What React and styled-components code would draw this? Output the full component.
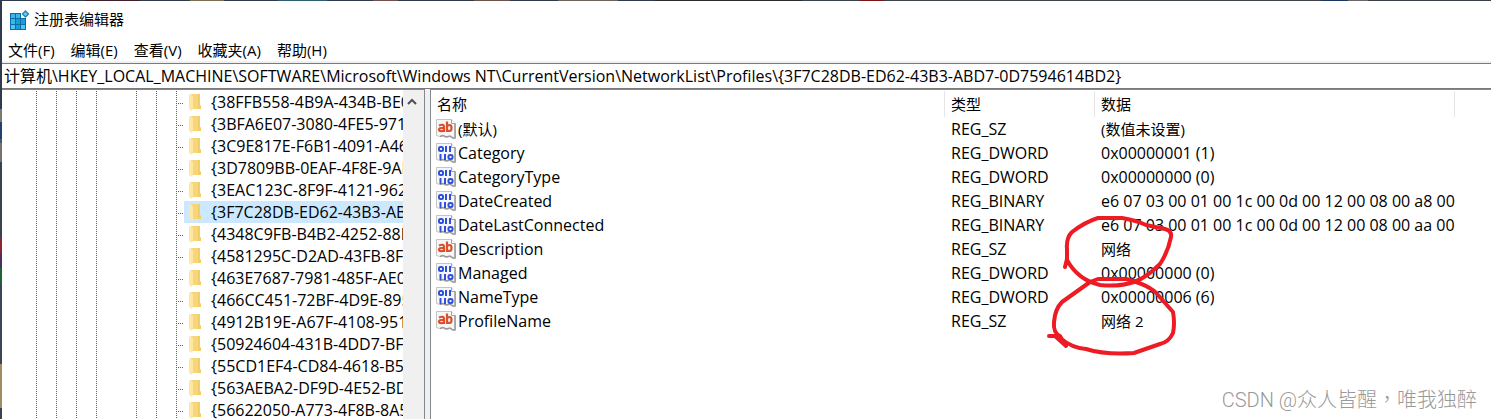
import React from "react";
import styled, { createGlobalStyle, css } from "styled-components";

const GlobalStyle = createGlobalStyle`
    * {
        box-sizing: border-box;
    }

    body {
        margin: 0;
        font-family: "Open Sans", "Noto Sans CJK SC", sans-serif;
        font-size: 15px;
        color: #000;
    }

    button, input, table {
        font: inherit;
        color: inherit;
    }
`

const Desktop = styled.div`
    height: 100vh;
    padding: 1px 0 0 2px;
    background:
        linear-gradient(to bottom, #2f3b4c 0 109px, #7d7773 109px 122px, #23406f 122px 139px, #4c5563 139px 143px, #77706c 143px 162px, #39434f 162px 237px, #8a2535 237px 253px, #4a2f63 253px 268px, #1e6432 268px 284px, #3a4654 284px 364px, #a08c60 364px 408px, #39434f 408px) 0 0 / 2px 100% no-repeat,
        linear-gradient(to right, #2f3a4c 0 85px, #401e28 85px 140px, #2f3a4c 140px 190px, #7a6d50 190px 224px, #2f3a4c 224px 278px, #2d5f74 278px 327px, #2f3a4c 327px 373px, #74504a 373px 398px, #2f3a4c 398px 474px, #6d5448 474px 510px, #2f3a4c 510px 558px, #6e6258 558px 618px, #2f3a4c 618px 655px, #2a2a26 655px 802px, #3a434c 802px 860px, #7a1418 860px 884px, #3c444a 884px 1321px, #1b3560 1321px 1348px, #6a6868 1348px 1368px, #39404a 1368px);
    overflow: hidden;
`

const Window = styled.div`
    position: relative;
    height: 100%;
    display: flex;
    flex-direction: column;
    background: #fff;
`

const TitleBar = styled.header`
    height: 38px;
    flex: none;
    display: flex;
    align-items: center;
    gap: 4px;
    padding-left: 7px;
`

const Title = styled.h1`
    margin: 0;
    padding-bottom: 2px;
    font-size: 15px;
    font-weight: 400;
    line-height: 22px;
`

const MenuBar = styled.nav`
    height: 24px;
    flex: none;
    display: flex;
    gap: 16px;
    padding: 0 6px;
    border-bottom: 2px solid #f0f0f0;
`

const MenuItem = styled.button`
    padding: 0;
    border: 0;
    background: none;
    line-height: 22px;
`

const AddressBar = styled.input`
    height: 26px;
    flex: none;
    width: 100%;
    padding: 0 2px 2px;
    border: 0;
    border-top: 1px solid #7a7a7a;
    border-bottom: 1px solid #7a7a7a;
    outline: none;
    background: #fff;
    font-size: 16px;
`

const Panes = styled.main`
    flex: 1;
    min-height: 0;
    display: flex;
    gap: 5px;
    background: #f0f0f0;
`

const TreePane = styled.section`
    width: 423px;
    flex: none;
    display: flex;
    border-top: 1px solid #828790;
    border-right: 1px solid #828790;
    background: #fff;
`

const Tree = styled.ul`
    flex: 1;
    min-width: 0;
    margin: 0;
    padding: 1px 0 0 20px;
    list-style: none;
    overflow: hidden;
`

const TreeItem = styled.li`
    height: 22px;
    display: flex;
`

const Guide = styled.span`
    width: 20px;
    flex: none;
    background: ${props => props.$empty
        ? "none"
        : "repeating-linear-gradient(to bottom, #606060 0 1px, transparent 1px 2px) 14px 0 / 1px 100% no-repeat"};
`

const Branch = styled.span`
    width: 8px;
    flex: none;
    margin-left: 14px;
    background:
        repeating-linear-gradient(to bottom, #606060 0 1px, transparent 1px 2px) 0 0 / 1px 100% no-repeat,
        repeating-linear-gradient(to right, #606060 0 1px, transparent 1px 2px) 0 12px / 100% 1px no-repeat;
`

const TreeKey = styled.button`
    flex: 1;
    min-width: 0;
    display: flex;
    align-items: center;
    gap: 9px;
    padding: 0 0 0 5px;
    border: 0;
    background: ${props => props.$selected ? "#cce8ff" : "none"};
    font-size: 16px;
    line-height: 22px;
    white-space: nowrap;
    overflow: hidden;

    svg {
        flex: none;
    }
`

const ScrollBar = styled.div`
    width: 21px;
    flex: none;
    background: #f0f0f0;
`

const ScrollUp = styled.button`
    width: 100%;
    height: 22px;
    display: flex;
    align-items: center;
    justify-content: center;
    padding: 0 3px 0 0;
    border: 0;
    background: none;
`

const ValuesPane = styled.section`
    flex: 1;
    min-width: 0;
    padding-top: 1px;
    border-top: 1px solid #828790;
    border-left: 1px solid #828790;
    background: #fff;
    overflow: hidden;
`

const Values = styled.table`
    width: 100%;
    table-layout: fixed;
    border-collapse: separate;
    border-spacing: 0;
`

const Column = styled.col`
    width: ${props => props.$width};
`

const cell = css`
    padding: 0 0 0 6px;
    text-align: left;
    font-weight: 400;
    white-space: nowrap;
`

const HeadCell = styled.th`
    ${cell}
    height: 26px;
    line-height: 26px;
    border-right: 1px solid #e5e5e5;

    &:last-child {
        border: 0;
    }
`

const Cell = styled.td`
    ${cell}
    height: 24px;
    font-size: ${props => props.$cjk ? "15px" : "16px"};
    line-height: 24px;
`

const Name = styled.span`
    display: flex;
    align-items: center;
    gap: 2px;
    height: 24px;
    margin-left: -1px;
`

const Marks = styled.svg`
    position: absolute;
    left: 1040px;
    top: 210px;
    pointer-events: none;
`

const Watermark = styled.div`
    position: absolute;
    right: 14px;
    bottom: 5px;
    font-family: Roboto, "Noto Sans CJK TC", sans-serif;
    font-size: 20px;
    font-weight: 300;
    line-height: 28px;
    color: #999;
`

const RegistryIcon = () => (
    <svg width="21" height="21" viewBox="0 0 21 21" aria-hidden="true">
        <path d="M1 3h11v5h5v12H1z" fill="#0a6ea6" />
        <path d="M2 4h4v4H2zM7 4h4v4H7zM2 9h4v5H2z" fill="#3fb4ea" />
        <path d="M7 9h4v5H7zM12 9h4v5h-4zM7 15h4v4H7zM2 15h4v4H2z" fill="#1d9ad8" />
        <path d="M12 15h4v4h-4zM2 15h4v4H2z" fill="#52c4f2" />
        <path d="M16.500 0l4 4-4 4-4-4z" fill="#2685b5" />
        <path d="M16.500 2l2 2-2 2-2-2z" fill="#69cdf5" />
    </svg>
)

const FolderIcon = () => (
    <svg width="13" height="18" viewBox="0 0 13 18" aria-hidden="true">
        <path d="M2 1h9v11l1 1v3H3z" fill="#f7d67a" />
        <path d="M9 1h2v11l1 1v3H9z" fill="#f3cd68" />
        <path d="M0 1l4 2v13l-1 2-3-2z" fill="#ffe7a2" />
    </svg>
)

const Paper = () => (
    <>
        <path d="M0.500 0.500h15l4 4v14l-2 1-4-2-3 1-3-2-4 1-3-1z" fill="#f5f6f8" stroke="#c4c4c4" />
        <path d="M15.500 0.500v4h4" fill="#fff" stroke="#a0a0a0" />
        <path d="M19 5v14h-2l-3-2-4 1-3-1.500-3 1" fill="none" stroke="#999" strokeWidth="1.500" />
    </>
)

const StringIcon = () => (
    <svg width="20" height="20" viewBox="0 0 20 20" aria-hidden="true">
        <Paper />
        <g fill="none" stroke="#dc4f2c" strokeWidth="2.200">
            <path d="M3 6.500Q8 4.500 8 8v5M8 9H5.500Q3 9 3 10.700T5.500 12.200Q7.500 12 8 10.500" />
            <path d="M11 2.500V13M11 7.500Q12 6 13.500 6Q15.500 6 15.500 9T13.500 12Q12 12 11 11" />
        </g>
    </svg>
)

const BinaryIcon = () => (
    <svg width="20" height="20" viewBox="0 0 20 20" aria-hidden="true">
        <Paper />
        <g fill="none" stroke="#2f50dc" strokeWidth="2">
            <rect x="3" y="4" width="4" height="4" rx="1.500" />
            <path d="M10 3v6M14 3v6M4.500 11v6M9 11v6" />
            <rect x="12.500" y="12" width="4" height="4" rx="1.500" />
        </g>
    </svg>
)

const menus = ["文件(F)", "编辑(E)", "查看(V)", "收藏夹(A)", "帮助(H)"];

const path = "计算机\\HKEY_LOCAL_MACHINE\\SOFTWARE\\Microsoft\\Windows NT\\CurrentVersion\\NetworkList\\Profiles\\{3F7C28DB-ED62-43B3-ABD7-0D7594614BD2}";

// one entry per indent level, false where the parent has no further siblings
const levels = [true, true, true, true, false, true, true];

const keys = [
    "{38FFB558-4B9A-434B-BE0",
    "{3BFA6E07-3080-4FE5-971",
    "{3C9E817E-F6B1-4091-A46",
    "{3D7809BB-0EAF-4F8E-9AB",
    "{3EAC123C-8F9F-4121-962",
    "{3F7C28DB-ED62-43B3-AB",
    "{4348C9FB-B4B2-4252-88D",
    "{4581295C-D2AD-43FB-8F6",
    "{463E7687-7981-485F-AE0",
    "{466CC451-72BF-4D9E-895",
    "{4912B19E-A67F-4108-951",
    "{50924604-431B-4DD7-BF2",
    "{55CD1EF4-CD84-4618-B58",
    "{563AEBA2-DF9D-4E52-BD",
    "{56622050-A773-4F8B-8A5",
];

const values = [
    { name: "(默认)", type: "REG_SZ", data: "(数值未设置)", cjk: true },
    { name: "Category", type: "REG_DWORD", data: "0x00000001 (1)" },
    { name: "CategoryType", type: "REG_DWORD", data: "0x00000000 (0)" },
    { name: "DateCreated", type: "REG_BINARY", data: "e6 07 03 00 01 00 1c 00 0d 00 12 00 08 00 a8 00" },
    { name: "DateLastConnected", type: "REG_BINARY", data: "e6 07 03 00 01 00 1c 00 0d 00 12 00 08 00 aa 00" },
    { name: "Description", type: "REG_SZ", data: "网络", cjk: true },
    { name: "Managed", type: "REG_DWORD", data: "0x00000000 (0)" },
    { name: "NameType", type: "REG_DWORD", data: "0x00000006 (6)" },
    { name: "ProfileName", type: "REG_SZ", data: "网络 2", cjk: true },
];

const App = () => {

    return (
        <Desktop>
            <GlobalStyle />
            <Window>
                <TitleBar>
                    <RegistryIcon />
                    <Title>注册表编辑器</Title>
                </TitleBar>
                <MenuBar>
                    {menus.map(menu => (
                        <MenuItem key={menu} type="button">{menu}</MenuItem>
                    ))}
                </MenuBar>
                <AddressBar type="text" aria-label="地址" defaultValue={path} />
                <Panes>
                    <TreePane>
                        <Tree>
                            {keys.map(key => (
                                <TreeItem key={key}>
                                    {levels.map((line, index) => (
                                        <Guide key={index} $empty={!line} />
                                    ))}
                                    <Branch />
                                    <TreeKey type="button" $selected={key.startsWith("{3F7C28DB")}>
                                        <FolderIcon />
                                        {key}
                                    </TreeKey>
                                </TreeItem>
                            ))}
                        </Tree>
                        <ScrollBar>
                            <ScrollUp type="button" aria-label="向上滚动">
                                <svg width="10" height="7" viewBox="0 0 10 7">
                                    <path d="M1 6l4-4 4 4" fill="none" stroke="#505050" strokeWidth="2" />
                                </svg>
                            </ScrollUp>
                        </ScrollBar>
                    </TreePane>
                    <ValuesPane>
                        <Values>
                            <colgroup>
                                <Column $width="514px" />
                                <Column $width="150px" />
                                <Column $width="360px" />
                                <Column $width="auto" />
                            </colgroup>
                            <thead>
                                <tr>
                                    <HeadCell>名称</HeadCell>
                                    <HeadCell>类型</HeadCell>
                                    <HeadCell>数据</HeadCell>
                                    <HeadCell as="td" />
                                </tr>
                            </thead>
                            <tbody>
                                {values.map(value => (
                                    <tr key={value.name}>
                                        <Cell $cjk={value.name.startsWith("(")}>
                                            <Name>
                                                {value.type === "REG_SZ" ? <StringIcon /> : <BinaryIcon />}
                                                {value.name}
                                            </Name>
                                        </Cell>
                                        <Cell>{value.type}</Cell>
                                        <Cell $cjk={value.cjk}>{value.data}</Cell>
                                        <Cell />
                                    </tr>
                                ))}
                            </tbody>
                        </Values>
                    </ValuesPane>
                </Panes>
                <Marks width="150" height="155" viewBox="1042 211 150 155" aria-hidden="true">
                    <g fill="none" stroke="#ed1c24" strokeWidth="4" strokeLinecap="round" strokeLinejoin="round">
                        <path d="M1065 267L1067 259V249Q1066 238 1072 232Q1085 222 1098 218H1122Q1135 220 1146 225L1165 229Q1172 231 1171 237Q1168 252 1160 264Q1146 278 1134 282Q1120 287 1100 285Q1078 280 1067 260" />
                        <path d="M1049 336H1055L1066 346L1060 336Q1053 333 1054 322Q1055 309 1062 302L1090 282L1098 279H1126Q1150 285 1158 295L1173 312Q1175 323 1173 333Q1169 342 1160 344L1134 353Q1105 355 1086 349Q1072 348 1060 338" />
                    </g>
                </Marks>
                <Watermark>CSDN @众人皆醒，唯我独醉</Watermark>
            </Window>
        </Desktop>
    )
}

export default App;
